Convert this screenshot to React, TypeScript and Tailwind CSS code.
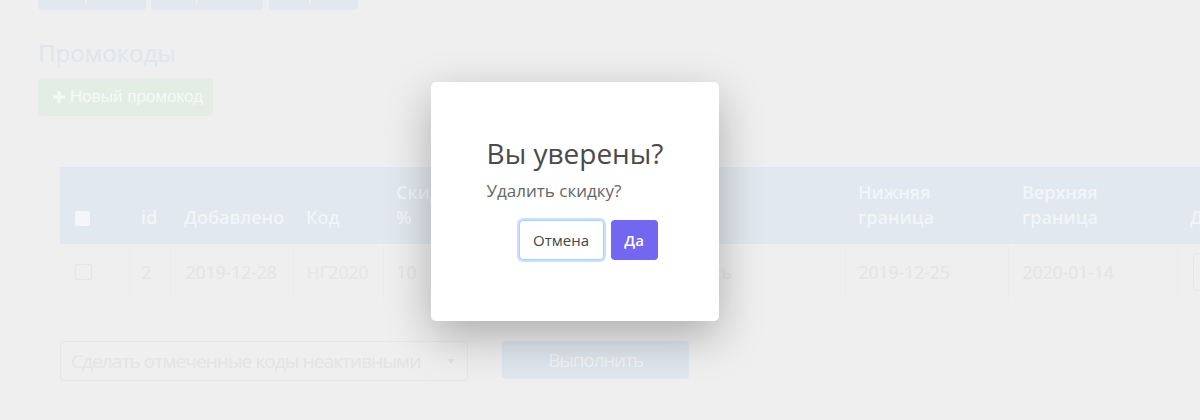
import React from "react";

const font = { fontFamily: '"Open Sans", "Liberation Sans", sans-serif' };

function Cb({ header }: { header?: boolean }) {
  return header ? (
    <div className="w-[15px] h-[15px] rounded-[2px] bg-[#f4f6f8]" />
  ) : (
    <div className="w-[17px] h-[16px] rounded-[3px] border border-[#e4e5e4] bg-[#eff0ef]" />
  );
}

const td = "text-[17.5px] leading-[25px] border-l border-[#ebeceb] align-middle";

export default function App() {
  return (
    <div className="relative w-[1200px] h-[420px] overflow-hidden bg-[#eeefee]" style={font}>
      {/* faded page */}
      <div className="pl-[38px]">
        <div className="flex gap-[5px] -mt-[22px]">
          <div className="w-[108px] h-[32px] rounded-[4px] bg-[#e1e8ef] text-[#f3f5f8] text-[14px] flex items-center justify-center">Экспорт в CSV</div>
          <div className="w-[112px] h-[32px] rounded-[4px] bg-[#e1e8ef] text-[#f3f5f8] text-[14px] flex items-center justify-center">Импорт из CSV</div>
          <div className="ml-[1px] w-[89px] h-[32px] rounded-[4px] bg-[#e1e8ef] text-[#f3f5f8] text-[14px] flex items-center justify-center">Настройки</div>
        </div>
        <h1 className="mt-[27px] text-[24px] leading-[32px] text-[#dde6ef]">Промокоды</h1>
        <div
          className="mt-[9px] w-[175px] h-[38px] rounded-[4px] bg-[#e4ede4] text-[#f6f9f6] flex items-center pl-[14px] gap-[4px] text-[17px]"
          style={{ fontFamily: '"Liberation Sans", sans-serif' }}
        >
          <svg width="14" height="14" viewBox="0 0 14 14">
            <path d="M7 1v12M1 7h12" stroke="#f6f9f6" strokeWidth="3" />
          </svg>
          Новый промокод
        </div>
      </div>

      <div className="ml-[60px] mt-[51px]">
        <table className="border-collapse table-fixed w-[1200px]">
          <colgroup>
            <col className="w-[69px]" />
            <col className="w-[41px]" />
            <col className="w-[123px]" />
            <col className="w-[90px]" />
            <col className="w-[96px]" />
            <col className="w-[140px]" />
            <col className="w-[226px]" />
            <col className="w-[163px]" />
            <col className="w-[169px]" />
            <col className="w-[200px]" />
          </colgroup>
          <thead>
            <tr className="bg-[#e1e8ef] h-[77px] text-[#f3f5f8] text-[18px] leading-[25px]">
              <th className="align-bottom text-left pl-[15px] pb-[18px]"><Cb header /></th>
              <th className="align-bottom text-left pl-[12px] pb-[14px] font-semibold">id</th>
              <th className="align-bottom text-left pl-[14px] pb-[14px] font-semibold">Добавлено</th>
              <th className="align-bottom text-left pl-[13px] pb-[14px] font-semibold">Код</th>
              <th className="align-bottom text-left pl-[13px] pb-[14px] font-semibold">Скидка<br />%</th>
              <th className="align-bottom text-left pl-[12px] pb-[14px] font-semibold">Тип</th>
              <th className="align-bottom text-left pl-[12px] pb-[14px] font-semibold">Статус</th>
              <th className="align-bottom text-left pl-[13px] pb-[14px] font-semibold">Нижняя<br />граница</th>
              <th className="align-bottom text-left pl-[14px] pb-[14px] font-semibold">Верхняя<br />граница</th>
              <th className="align-bottom text-left pl-[13px] pb-[14px] font-semibold">Действия</th>
            </tr>
          </thead>
          <tbody>
            <tr className="h-[56px] text-[#e3e4e4]">
              <td className="pl-[15px] align-middle"><Cb /></td>
              <td className={td + " pl-[12px]"}>2</td>
              <td className={td + " pl-[15px]"}>2019-12-28</td>
              <td className={td + " pl-[13px] text-[#e2e7ed]"}>НГ2020</td>
              <td className={td + " pl-[13px]"}>10</td>
              <td className={td + " pl-[12px]"}>Процент</td>
              <td className={td + " text-right pr-[113px]"}>Закончилось</td>
              <td className={td + " pl-[13px]"}>2019-12-25</td>
              <td className={td + " pl-[14px]"}>2020-01-14</td>
              <td className={td + " pl-[15px]"}>
                <div className="w-[80px] h-[38px] rounded-[4px] border border-[#e3e8ee]" />
              </td>
            </tr>
          </tbody>
        </table>
      </div>

      <div className="ml-[60px] mt-[41px] flex items-start gap-[34px]">
        <div className="w-[408px] h-[40px] rounded-[4px] border border-[#e6e7e6] flex items-center justify-between pl-[10px] pr-[12px] text-[#e3e4e3] text-[19px]">
          <span className="tracking-[-0.9px]">Сделать отмеченные коды неактивными</span>
          <svg width="8" height="5" viewBox="0 0 8 5"><path d="M0 0h8L4 5z" fill="#e3e4e3" /></svg>
        </div>
        <div className="w-[187px] h-[38px] rounded-[4px] bg-[#dfe6ee] text-[#f1f4f7] text-[19px] flex items-center justify-center tracking-[-1.2px]">
          Выполнить
        </div>
      </div>

      {/* modal */}
      <div className="absolute left-[431px] top-[82px] w-[288px] h-[239px] bg-white rounded-[5px] shadow-[0_15px_45px_rgba(0,0,0,0.28)] flex justify-center">
        <div className="flex flex-col items-start pt-[54px]">
          <div className="text-[28px] leading-[34px] text-[#4a4a4a]">Вы уверены?</div>
          <div className="text-[17px] leading-[24px] text-[#666] mt-[9px]">Удалить скидку?</div>
          <div className="flex items-center mt-[17px] pl-[32px]">
            <button className="w-[85px] h-[40px] rounded-[4px] bg-white border border-[#a9d2fb] shadow-[0_0_0_2px_#c7e2fd] text-[15px] text-[#444]">
              Отмена
            </button>
            <button className="ml-[7px] w-[47px] h-[40px] rounded-[4px] bg-[#7366ef] text-white text-[15px] font-semibold">
              Да
            </button>
          </div>
        </div>
      </div>
    </div>
  );
}
